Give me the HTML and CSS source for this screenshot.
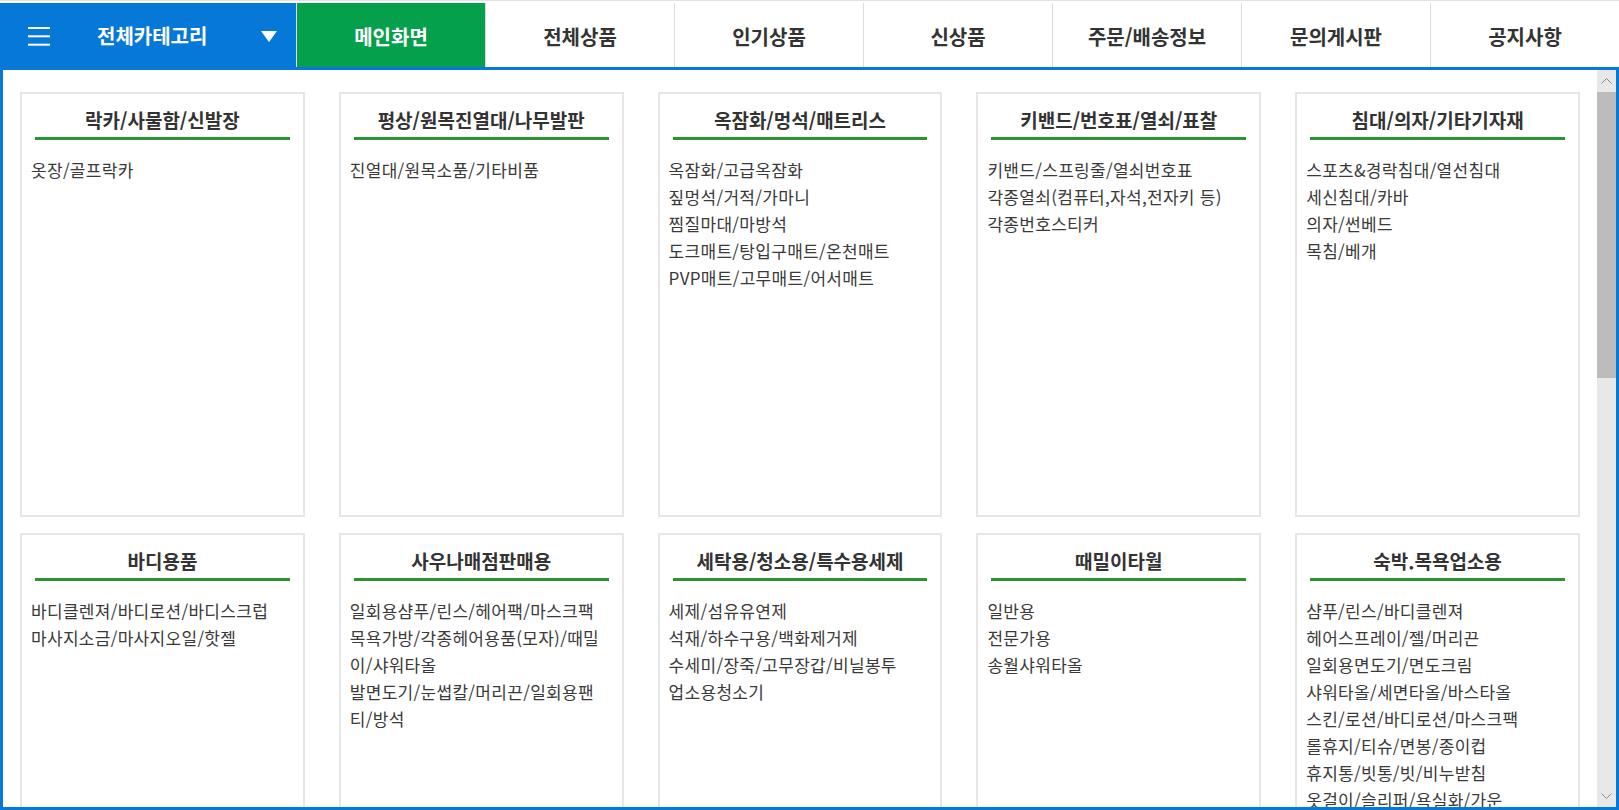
FILE: index.html
```html
<!DOCTYPE html>
<html lang="ko">
<head>
  <meta charset="UTF-8">
  <title>전체카테고리</title>
  <link rel="stylesheet" href="styles.css">
</head>
<body>

  <div class="page">
    <div class="gnb">
      <div class="allcat">
        <svg class="burger" width="22" height="19" viewBox="0 0 22 19">
          <rect x="0" y="0" width="22" height="2" fill="#fff"/>
          <rect x="0" y="8.3" width="22" height="2" fill="#fff"/>
          <rect x="0" y="16.7" width="22" height="2" fill="#fff"/>
        </svg>
        <span class="allcat-txt">전체카테고리</span>
        <svg class="arrow" width="16" height="11" viewBox="0 0 16 11">
          <polygon points="0,0 16,0 8,11" fill="#fff"/>
        </svg>
      </div>
      <a class="tab on">메인화면</a>
      <a class="tab">전체상품</a>
      <a class="tab">인기상품</a>
      <a class="tab">신상품</a>
      <a class="tab">주문/배송정보</a>
      <a class="tab">문의게시판</a>
      <a class="tab">공지사항</a>
    </div>

    <div class="catbox">
      <div class="catlist">

        <div class="card">
          <h3>락카/사물함/신발장</h3>
          <ul>
            <li>옷장/골프락카</li>
          </ul>
        </div>

        <div class="card">
          <h3>평상/원목진열대/나무발판</h3>
          <ul>
            <li>진열대/원목소품/기타비품</li>
          </ul>
        </div>

        <div class="card">
          <h3>옥잠화/멍석/매트리스</h3>
          <ul>
            <li>옥잠화/고급옥잠화</li>
            <li>짚멍석/거적/가마니</li>
            <li>찜질마대/마방석</li>
            <li>도크매트/탕입구매트/온천매트</li>
            <li>PVP매트/고무매트/어서매트</li>
          </ul>
        </div>

        <div class="card">
          <h3>키밴드/번호표/열쇠/표찰</h3>
          <ul>
            <li>키밴드/스프링줄/열쇠번호표</li>
            <li>각종열쇠(컴퓨터,자석,전자키 등)</li>
            <li>각종번호스티커</li>
          </ul>
        </div>

        <div class="card">
          <h3>침대/의자/기타기자재</h3>
          <ul>
            <li>스포츠&amp;경락침대/열선침대</li>
            <li>세신침대/카바</li>
            <li>의자/썬베드</li>
            <li>목침/베개</li>
          </ul>
        </div>

        <div class="card">
          <h3>바디용품</h3>
          <ul>
            <li>바디클렌져/바디로션/바디스크럽</li>
            <li>마사지소금/마사지오일/핫젤</li>
          </ul>
        </div>

        <div class="card">
          <h3>사우나매점판매용</h3>
          <ul>
            <li>일회용샴푸/린스/헤어팩/마스크팩</li>
            <li>목욕가방/각종헤어용품(모자)/때밀이/샤워타올</li>
            <li>발면도기/눈썹칼/머리끈/일회용팬티/방석</li>
          </ul>
        </div>

        <div class="card">
          <h3>세탁용/청소용/특수용세제</h3>
          <ul>
            <li>세제/섬유유연제</li>
            <li>석재/하수구용/백화제거제</li>
            <li>수세미/장죽/고무장갑/비닐봉투</li>
            <li>업소용청소기</li>
          </ul>
        </div>

        <div class="card">
          <h3>때밀이타월</h3>
          <ul>
            <li>일반용</li>
            <li>전문가용</li>
            <li>송월샤워타올</li>
          </ul>
        </div>

        <div class="card">
          <h3>숙박.목욕업소용</h3>
          <ul>
            <li>샴푸/린스/바디클렌져</li>
            <li>헤어스프레이/젤/머리끈</li>
            <li>일회용면도기/면도크림</li>
            <li>샤워타올/세면타올/바스타올</li>
            <li>스킨/로션/바디로션/마스크팩</li>
            <li>롤휴지/티슈/면봉/종이컵</li>
            <li>휴지통/빗통/빗/비누받침</li>
            <li>옷걸이/슬리퍼/욕실화/가운</li>
          </ul>
        </div>

      </div>

      <!-- 스크롤바 -->
      <div class="sbar">
        <div class="sbtn">
          <svg width="11" height="6" viewBox="0 0 11 6"><polyline points="0.5,5.5 5.5,0.5 10.5,5.5" fill="none" stroke="#8a8a8a" stroke-width="1"/></svg>
        </div>
        <div class="sthumb"></div>
        <div class="strack"></div>
        <div class="sbtn">
          <svg width="11" height="6" viewBox="0 0 11 6"><polyline points="0.5,0.5 5.5,5.5 10.5,0.5" fill="none" stroke="#8a8a8a" stroke-width="1"/></svg>
        </div>
      </div>
    </div>
  </div>

</body>
</html>
```

FILE: styles.css
```css
body {
  margin: 0;
  font-family: "Noto Sans CJK KR", "Noto Sans", sans-serif;
  color: #333;
  background: #fff;
}
.page {
  border-top: 1px solid #e2e2e2;
  padding-top: 2px;
}
.gnb {
  display: flex;
  height: 64px;
}
.allcat {
  width: 296px;
  display: flex;
  align-items: center;
  padding: 0 19px 0 28px;
  box-sizing: border-box;
  background-color: #0678d8;
  color: #fff;
}
.burger {
  margin-right: 47px;
  margin-top: 2px;
}
.allcat-txt {
  flex: 1;
  font-size: 20px;
  font-weight: bold;
}
.arrow {
  margin-top: 2px;
}
.tab {
  flex: 1;
  display: flex;
  align-items: center;
  justify-content: center;
  border-left: 1px solid #dcdcdc;
  font-size: 20px;
  font-weight: bold;
  color: #333;
  padding-top: 3px;
  cursor: pointer;
}
.tab.on {
  background-color: #05a04b;
  color: #fff;
}
.catbox {
  display: flex;
  height: 743px;
  box-sizing: border-box;
  border: 3px solid #0678d8;
}
.catlist {
  flex: 1;
  overflow: hidden;
  display: grid;
  grid-template-columns: repeat(5, 1fr);
  grid-auto-rows: 425px;
  column-gap: 34px;
  row-gap: 16px;
  padding: 22px 17px 0;
}
.card {
  border: 2px solid #e6e6e6;
  box-sizing: border-box;
}
.card h3 {
  margin: 0 13px;
  padding: 13px 0 4px;
  font-size: 19px;
  line-height: 26px;
  text-align: center;
  color: #333;
  border-bottom: 3px solid #2b9332;
}
.card ul {
  list-style: none;
  margin: 16px 0 0;
  padding: 0 14px 0 9px;
}
.card li {
  font-size: 17px;
  line-height: 27px;
  letter-spacing: 0.3px;
  color: #3a3a3a;
}
.sbar {
  width: 19px;
  display: flex;
  flex-direction: column;
  background-color: #e8e8e8;
}
.sbtn {
  height: 22px;
  display: flex;
  align-items: center;
  justify-content: center;
}
.sthumb {
  height: 286px;
  background-color: #bcbcbc;
}
.strack {
  flex: 1;
}
```
